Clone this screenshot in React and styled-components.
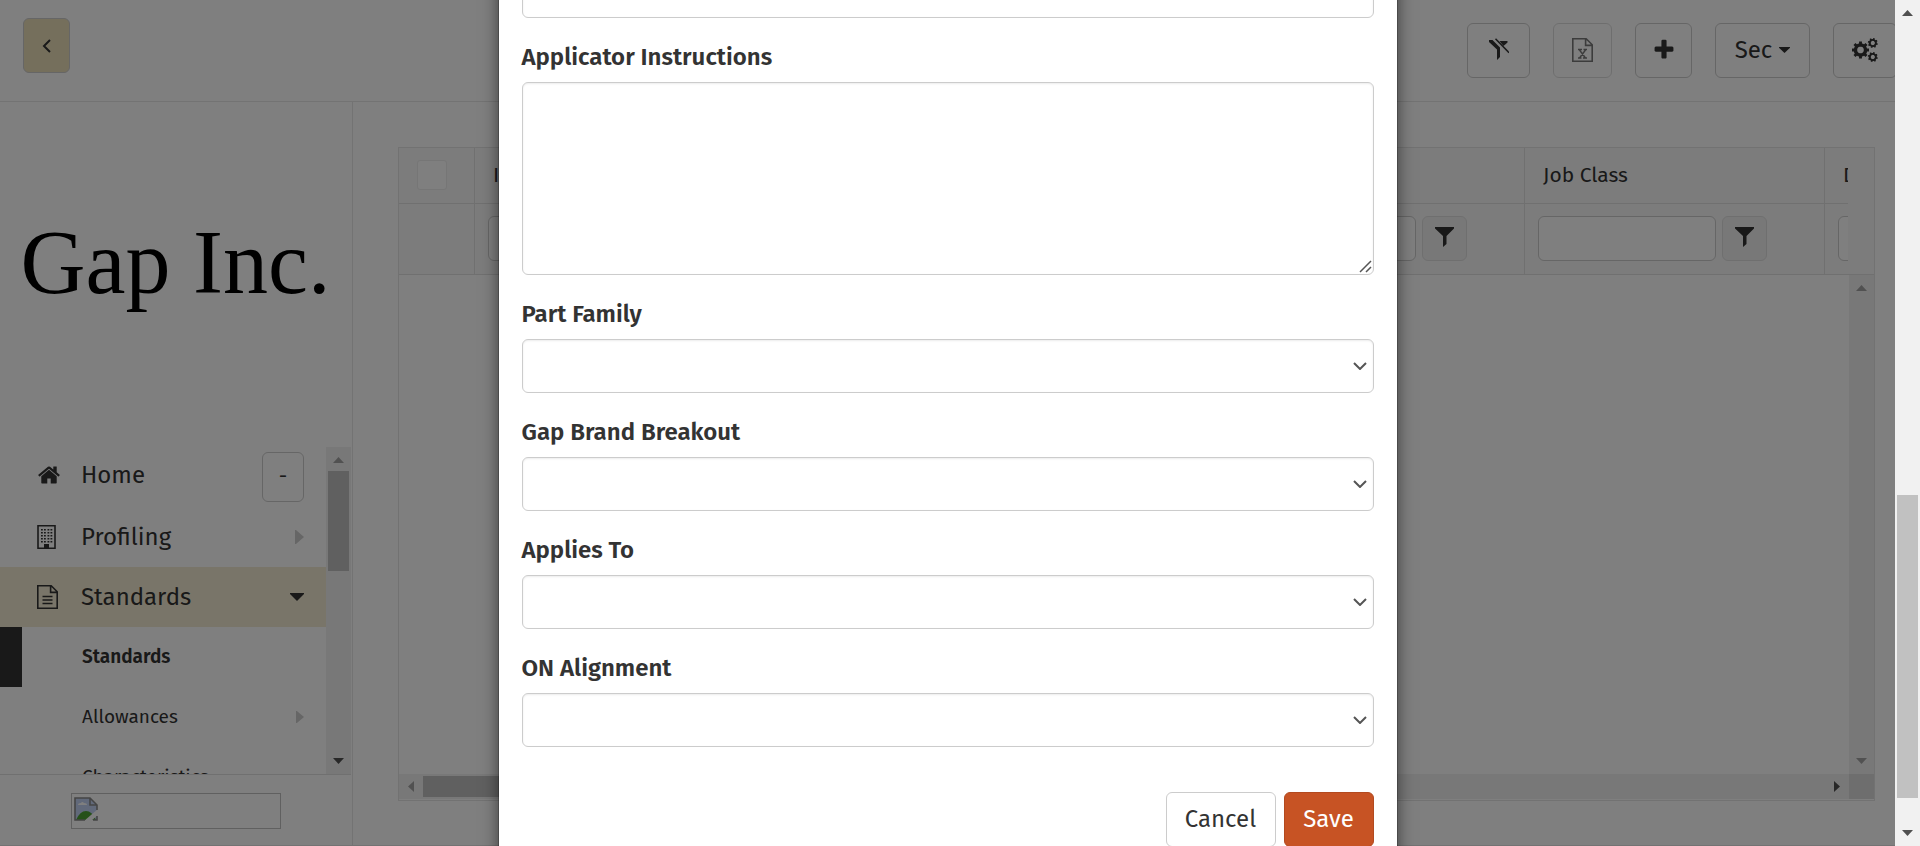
import React from "react";
import styled, { createGlobalStyle, css } from "styled-components";

const GlobalStyle = createGlobalStyle`
  *, *::before, *::after { box-sizing: border-box; }
  body {
    margin: 0;
    background: #fff;
    color: #333;
    font: 400 24px/34px "Fira Sans", "Noto Sans", sans-serif;
  }
  button, input, select, textarea { font: inherit; color: inherit; margin: 0; }
`;

/* ---------- page frame ---------- */

const Page = styled.div`
  display: flex;
  height: 100vh;
  overflow: hidden;
`;

const Viewport = styled.div`
  position: relative;
  flex: 1;
  min-width: 0;
  overflow: hidden;
`;

const Shell = styled.div`
  display: flex;
  flex-direction: column;
  height: 100%;
  border-bottom: 1px solid #e7e7e7;
`;

const TopBar = styled.header`
  display: flex;
  align-items: flex-start;
  justify-content: space-between;
  height: 102px;
  flex: none;
  padding: 18px 0 0 23px;
  border-bottom: 1px solid #e7e7e7;
`;

const Body = styled.div`
  display: flex;
  flex: 1;
  min-height: 0;
`;

/* ---------- buttons ---------- */

const Button = styled.button`
  display: inline-flex;
  align-items: center;
  justify-content: center;
  gap: 7px;
  width: ${(p) => p.$width}px;
  height: 55px;
  padding: 0 0 2px;
  flex: none;
  background: #fff;
  border: 1px solid #ccc;
  border-radius: 6px;
  &:disabled { opacity: 0.65; color: #333; }
`;

const BackButton = styled(Button)`
  background: #ebdfb9;
  padding: 0;
`;

const SaveButton = styled(Button)`
  background: #c75324;
  border-color: #b34a20;
  color: #fff;
`;

const Tools = styled.div`
  display: flex;
  gap: 23px;
  padding-top: 5px;
  margin-right: -2px;
`;

/* ---------- sidebar ---------- */

const Sidebar = styled.aside`
  display: flex;
  flex-direction: column;
  width: 353px;
  flex: none;
  padding-right: 1px;
  border-right: 1px solid #e7e7e7;
`;

const Logo = styled.div`
  display: flex;
  align-items: center;
  justify-content: center;
  height: 345px;
  flex: none;
  padding-bottom: 24px;
  color: #000;
  font: 400 90px/120px "Liberation Serif", serif;
  white-space: nowrap;
`;

const MenuArea = styled.nav`
  display: flex;
  flex: 1;
  min-height: 0;
`;

const MenuList = styled.ul`
  flex: 1;
  margin: 0;
  padding: 0;
  list-style: none;
  overflow: hidden;
`;

const MenuItem = styled.li`
  display: flex;
  align-items: center;
  height: 60px;
  padding: 0 22px 0 37px;
  background: ${(p) => (p.$open ? "#f3ebd2" : "transparent")};
`;

const SubItem = styled(MenuItem)`
  padding-left: ${(p) => (p.$current ? 60 : 82)}px;
  font-size: 19px;
  font-weight: ${(p) => (p.$current ? 600 : 400)};
  ${(p) => p.$current && css`border-left: 22px solid #333;`}
`;

const MenuLink = styled.a`
  display: flex;
  flex: 1;
  align-items: center;
  color: inherit;
  text-decoration: none;
`;

const HomeLink = styled(MenuLink)`
  padding-bottom: 4px;
`;

const MenuIcon = styled.span`
  display: flex;
  width: 44px;
`;

const CollapseButton = styled(Button)`
  height: 50px;
  font-size: 21px;
`;

const SidebarFooter = styled.div`
  display: flex;
  justify-content: center;
  height: 71px;
  flex: none;
  padding-top: 18px;
  border-top: 1px solid #e0e0e0;
`;

const MissingImage = styled.div`
  width: 210px;
  height: 36px;
  padding: 2px;
  border: 1px solid #c0c0c0;
`;

/* ---------- scroll bars ---------- */

const ScrollTrack = styled.div`
  display: flex;
  flex-direction: ${(p) => (p.$horizontal ? "row" : "column")};
  align-items: center;
  justify-content: space-between;
  flex: none;
  ${(p) => (p.$horizontal ? "height" : "width")}: 25px;
  padding: ${(p) => (p.$horizontal ? "0 9px" : "10px 0")};
  background: #f1f1f1;
`;

const ScrollSpace = styled.div`
  display: flex;
  flex-direction: ${(p) => (p.$horizontal ? "row" : "column")};
  flex: 1;
  align-self: stretch;
  margin: ${(p) => (p.$horizontal ? "2px 9px" : "8px 2px")};
`;

const Thumb = styled.div`
  flex: 0 0 ${(p) => p.$size}%;
  background: #c1c1c1;
`;

const Before = styled.div`
  flex: 0 0 ${(p) => p.$size}%;
`;

function Scrollbar({ horizontal, start = 0, size = 0, startOff, endOff }) {
  const [a, b] = horizontal ? ["left", "right"] : ["up", "down"];
  return (
    <ScrollTrack $horizontal={horizontal} aria-hidden="true">
      <Arrow dir={a} off={startOff} />
      <ScrollSpace $horizontal={horizontal}>
        <Before $size={start} />
        {size > 0 && <Thumb $size={size} />}
      </ScrollSpace>
      <Arrow dir={b} off={endOff} />
    </ScrollTrack>
  );
}

const arrowShapes = {
  up: [11, 6, "M5.500 0 11 6H0z"],
  down: [11, 6, "M0 0h11L5.500 6z"],
  left: [6, 11, "M6 0v11L0 5.500z"],
  right: [6, 11, "M0 0l6 5.500-6 5.500z"],
};

function Arrow({ dir, off }) {
  const [w, h, d] = arrowShapes[dir];
  return (
    <svg width={w} height={h} viewBox={`0 0 ${w} ${h}`}>
      <path d={d} fill={off ? "#a3a3a3" : "#505050"} />
    </svg>
  );
}

/* ---------- grid ---------- */

const Content = styled.main`
  display: flex;
  flex: 1;
  min-width: 0;
  padding: 45px 20px 44px 45px;
`;

const GridBox = styled.section`
  display: flex;
  flex-direction: column;
  flex: 1;
  min-width: 0;
  border: 1px solid #e4e4e4;
`;

const GridHead = styled.div`
  padding-right: 26px;
  background: #f9f9f9;
  border-bottom: 1px solid #e0e0e0;
  overflow: hidden;
`;

const HeadClip = styled.div`
  overflow: hidden;
`;

const HeadTable = styled.table`
  width: 1726px;
  table-layout: fixed;
  border-collapse: separate;
  border-spacing: 0;
`;

const Col = styled.col`
  width: ${(p) => p.$width}px;
`;

const HeadCell = styled.th`
  height: 56px;
  padding: 0 18px 2px;
  border-right: 1px solid #e0e0e0;
  border-bottom: 1px solid #e0e0e0;
  font-size: 21px;
  font-weight: 400;
  text-align: left;
`;

const FilterCell = styled.td`
  height: 70px;
  padding: 0 13px 2px;
  border-right: 1px solid #e0e0e0;
`;

const FilterRow = styled.div`
  display: flex;
  gap: 6px;
`;

const FilterInput = styled.input`
  width: 178px;
  height: 45px;
  background: #fff;
  border: 1px solid #ccc;
  border-radius: 6px;
`;

const FilterButton = styled(Button)`
  height: 45px;
  background: #f1f1f1;
  border-color: #dfdfdf;
`;

const CheckBox = styled.input`
  appearance: none;
  display: block;
  width: 30px;
  height: 30px;
  background: #fff;
  border: 1px solid #ececec;
  border-radius: 3px;
`;

const GridBody = styled.div`
  display: flex;
  flex: 1;
  justify-content: flex-end;
`;

const GridFoot = styled.div`
  display: grid;
  grid-template-columns: 1fr 25px;
  padding-bottom: 1px;
`;

const Corner = styled.div`
  background: #dcdcdc;
`;

/* ---------- dialog ---------- */

const Backdrop = styled.div`
  position: absolute;
  inset: 0;
  overflow: hidden;
  background: rgba(0, 0, 0, 0.5);
`;

const Dialog = styled.form`
  max-width: 900px;
  margin: -60px auto 0;
  padding: 23px 23px 36px;
  background: #fff;
  background-clip: padding-box;
  border: 1px solid rgba(0, 0, 0, 0.2);
  box-shadow: 0 5px 15px rgba(0, 0, 0, 0.5);
`;

const Field = styled.div`
  display: flex;
  flex-direction: column;
  margin-bottom: 23px;
`;

const Label = styled.label`
  margin-bottom: 8px;
  font-weight: 600;
  line-height: 33px;
`;

const control = css`
  width: 100%;
  height: 54px;
  background: #fff;
  border: 1px solid #ccc;
  border-radius: 6px;
  box-shadow: inset 0 1px 2px rgba(0, 0, 0, 0.075);
`;

const TextBox = styled.input`
  ${control}
`;

const TextArea = styled.textarea`
  ${control}
  height: 193px;
  padding: 9px 18px;
  resize: vertical;
  &::-webkit-resizer {
    background: url("data:image/svg+xml,%3Csvg xmlns='http://www.w3.org/2000/svg' width='13' height='13'%3E%3Cpath d='M1 12 12 1M7 12l5-5' fill='none' stroke='%23555' stroke-width='1.500'/%3E%3C/svg%3E")
      no-repeat center;
  }
`;

const Select = styled.select`
  ${control}
  padding: 9px 18px;
  appearance: none;
  background: #fff url("data:image/svg+xml,%3Csvg xmlns='http://www.w3.org/2000/svg' width='14' height='8'%3E%3Cpath d='M1 1l6 6 6-6' fill='none' stroke='%23555' stroke-width='2'/%3E%3C/svg%3E")
    no-repeat right 6px center;
`;

const Actions = styled.div`
  display: flex;
  justify-content: flex-end;
  gap: 8px;
  padding-top: 22px;
`;

/* ---------- icons ---------- */

const BackIcon = () => (
  <svg width="10" height="14" viewBox="0 0 10 14">
    <path d="M8 1 2 7l6 6" fill="none" stroke="#333" strokeWidth="2" />
  </svg>
);

const HomeIcon = () => (
  <svg width="24" height="24" viewBox="0 0 1792 1792" fill="#333">
    <path d="M1472 992v480q0 26-19 45t-45 19h-384v-384h-256v384h-384q-26 0-45-19t-19-45v-480q0-1 .5-3t.5-3l575-474 575 474q1 2 1 6zm223-69l-62 74q-8 9-21 11h-3q-13 0-21-7l-692-577-692 577q-12 8-24 7-13-2-21-11l-62-74q-8-10-7-23.5t11-21.5l719-599q32-26 76-26t76 26l244 204v-195q0-14 9-23t23-9h192q14 0 23 9t9 23v408l219 182q10 8 11 21.5t-7 23.5z" />
  </svg>
);

const BuildingIcon = () => (
  <svg width="19" height="24" viewBox="0 0 19 24" fill="#333">
    <path d="M1 .8h17v22.4H1z" fill="none" stroke="#333" strokeWidth="1.6" />
    {[4, 7, 10, 13, 16].map((y) =>
      [4, 7, 10.5, 13.5].map((x) => <rect key={`${x}-${y}`} x={x} y={y} width="1.8" height="1.5" />)
    )}
    <path d="M7 23v-4h5v4z" />
  </svg>
);

const FileIcon = () => (
  <svg width="21" height="24" viewBox="0 0 21 24" fill="none" stroke="#333" strokeWidth="1.6">
    <path d="M.8.8h13.4l6 6v16.4H.8zM13.6 1v6.4h6.4" />
    <path d="M5.5 11.5h10M5.5 15h10M5.5 18.5h10" />
  </svg>
);

const ExcelIcon = () => (
  <svg width="21" height="24" viewBox="0 0 21 24" fill="none" stroke="#333" strokeWidth="1.6">
    <path d="M.8.8h13.4l6 6v16.4H.8zM13.6 1v6.4h6.4" />
    <path d="M7.5 12l6 8M13.5 12l-6 8M6 11.5h4M11.5 11.5H15M6 20h3.5M11 20h4" strokeWidth="1.4" />
  </svg>
);

const FilterIcon = () => (
  <svg width="19" height="20" viewBox="0 0 19 20" fill="#333">
    <path d="M0 0h19v1.500L11.500 9v8L8 20V9L0 1.500z" />
  </svg>
);

const NoFilterIcon = () => (
  <svg width="20" height="23" viewBox="0 0 20 23" fill="#333">
    <path d="M0 2h3.500L11 9.500V19L8 22V11.500L0 4z" />
    <path d="M10.500 3H18.500v1.500L14.500 8z" />
    <path d="M6.500 .7l13.500 14" stroke="#333" strokeWidth="1.500" />
  </svg>
);

const PlusIcon = () => (
  <svg width="24" height="24" viewBox="0 0 1792 1792" fill="#333">
    <path d="M1600 736v192q0 40-28 68t-68 28h-416v416q0 40-28 68t-68 28h-192q-40 0-68-28t-28-68v-416h-416q-40 0-68-28t-28-68v-192q0-40 28-68t68-28h416v-416q0-40 28-68t68-28h192q40 0 68 28t28 68v416h416q40 0 68 28t28 68z" />
  </svg>
);

const Gear = ({ x, y, r, hole, turn = 0 }) => (
  <g transform={`translate(${x} ${y}) rotate(${turn})`}>
    <circle r={(r * 0.8 + hole) / 2} fill="none" stroke="#333" strokeWidth={r * 0.8 - hole} />
    {[0, 45, 90, 135].map((a) => (
      <path
        key={a}
        transform={`rotate(${a})`}
        d={`M${-r * 0.17} ${-r}h${r * 0.34}v${r - hole}h${-r * 0.34}zM${-r * 0.17} ${hole}h${r * 0.34}v${r - hole}h${-r * 0.34}z`}
      />
    ))}
  </g>
);

const GearsIcon = () => (
  <svg width="26" height="24" viewBox="0 0 26 24" fill="#333">
    <Gear x={8.5} y={12} r={8.5} hole={3.4} />
    <Gear x={20.8} y={5} r={5} hole={2.2} turn={15} />
    <Gear x={20.8} y={19} r={5} hole={2.2} turn={15} />
  </svg>
);

const BrokenImageIcon = () => (
  <svg width="24" height="24" viewBox="0 0 24 24">
    <path d="M1 1h15l7 7v15H1z" fill="#c3d3f5" />
    <path d="M4 8q0-2 3-2 1-2 3 0 3 0 3 2z" fill="#fff" />
    <path d="M2 23q4-9 10-9t10 9z" fill="#4da332" />
    <path d="M10 24 24 12v6l-7 6z" fill="#fff" />
    <path d="M11 23H1V1h15l7 7v5M16 1v7h7M19 23h4v-4" fill="none" stroke="#8a8a8a" strokeWidth="1.6" />
  </svg>
);

const Caret = ({ size = 14, side }) =>
  side ? (
    <svg width={size / 2 + 2} height={size} viewBox="0 0 9 14" preserveAspectRatio="none">
      <path d="M0 0h1l8 7-8 7H0z" fill="#ccc" />
    </svg>
  ) : (
    <svg width={size} height={size === 14 ? 8 : 6} viewBox="0 0 14 8" preserveAspectRatio="none">
      <path d="M0 0h14v1L7 8 0 1z" fill="#333" />
    </svg>
  );

/* ---------- parts ---------- */

const columns = ["ID", "", "", "", "Job Class", "Description"];
const widths = [300, 150, 300, 300, 300, 300];

function Grid() {
  return (
    <GridBox>
      <GridHead>
        <HeadClip>
          <HeadTable>
            <colgroup>
              <Col $width={76} />
              {widths.map((w, i) => (
                <Col key={i} $width={w} />
              ))}
            </colgroup>
            <thead>
              <tr>
                <HeadCell>
                  <CheckBox type="checkbox" aria-label="Select all rows" />
                </HeadCell>
                {columns.map((name, i) => (
                  <HeadCell key={i} scope="col">{name}</HeadCell>
                ))}
              </tr>
            </thead>
            <tbody>
              <tr>
                <FilterCell />
                {columns.map((name, i) => (
                  <FilterCell key={i}>
                    {widths[i] === 300 && (
                      <FilterRow>
                        <FilterInput aria-label={`Filter ${name}`} />
                        <FilterButton type="button" $width={45} aria-label="Filter options">
                          <FilterIcon />
                        </FilterButton>
                      </FilterRow>
                    )}
                  </FilterCell>
                ))}
              </tr>
            </tbody>
          </HeadTable>
        </HeadClip>
      </GridHead>
      <GridBody>
        <Scrollbar startOff endOff />
      </GridBody>
      <GridFoot>
        <Scrollbar horizontal startOff size={60} />
        <Corner />
      </GridFoot>
    </GridBox>
  );
}

function SelectField({ id, label }) {
  return (
    <Field>
      <Label htmlFor={id}>{label}</Label>
      <Select id={id} />
    </Field>
  );
}

export default function App() {
  return (
    <Page>
      <GlobalStyle />
      <Viewport>
        <Shell>
          <TopBar>
            <BackButton type="button" $width={47} aria-label="Collapse menu"><BackIcon /></BackButton>
            <Tools>
              <Button type="button" $width={63} aria-label="Clear filters"><NoFilterIcon /></Button>
              <Button type="button" $width={59} disabled aria-label="Export to Excel"><ExcelIcon /></Button>
              <Button type="button" $width={57} aria-label="Add"><PlusIcon /></Button>
              <Button type="button" $width={95}>Sec <Caret size={11} /></Button>
              <Button type="button" $width={64} aria-label="Settings"><GearsIcon /></Button>
            </Tools>
          </TopBar>
          <Body>
            <Sidebar>
              <Logo>Gap Inc.</Logo>
              <MenuArea>
                <MenuList>
                  <MenuItem>
                    <HomeLink href="#home"><MenuIcon><HomeIcon /></MenuIcon>Home</HomeLink>
                    <CollapseButton type="button" $width={42}>-</CollapseButton>
                  </MenuItem>
                  <MenuItem>
                    <MenuLink href="#profiling"><MenuIcon><BuildingIcon /></MenuIcon>Profiling</MenuLink>
                    <Caret side />
                  </MenuItem>
                  <MenuItem $open>
                    <MenuLink href="#standards"><MenuIcon><FileIcon /></MenuIcon>Standards</MenuLink>
                    <Caret />
                  </MenuItem>
                  <SubItem $current><MenuLink href="#standards-list">Standards</MenuLink></SubItem>
                  <SubItem><MenuLink href="#allowances">Allowances</MenuLink><Caret side size={12} /></SubItem>
                  <SubItem><MenuLink href="#characteristics">Characteristics</MenuLink></SubItem>
                </MenuList>
                <Scrollbar startOff start={0} size={36} />
              </MenuArea>
              <SidebarFooter>
                <MissingImage><BrokenImageIcon /></MissingImage>
              </SidebarFooter>
            </Sidebar>
            <Content><Grid /></Content>
          </Body>
        </Shell>
        <Backdrop>
          <Dialog>
            <Field><TextBox aria-label="Description" /></Field>
            <Field>
              <Label htmlFor="instructions">Applicator Instructions</Label>
              <TextArea id="instructions" />
            </Field>
            <SelectField id="family" label="Part Family" />
            <SelectField id="breakout" label="Gap Brand Breakout" />
            <SelectField id="applies" label="Applies To" />
            <SelectField id="alignment" label="ON Alignment" />
            <Actions>
              <Button type="button" $width={110}>Cancel</Button>
              <SaveButton type="submit" $width={90}>Save</SaveButton>
            </Actions>
          </Dialog>
        </Backdrop>
      </Viewport>
      <Scrollbar start={59} size={38} />
    </Page>
  );
}
